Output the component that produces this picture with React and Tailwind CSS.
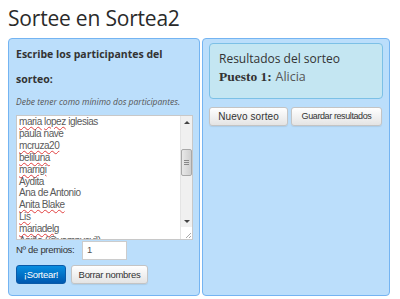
import { useState } from "react";

const names = [
  { t: "maria lopez iglesias", bad: ["maria", "lopez"] },
  { t: "paula nave" },
  { t: "mcruza20", all: true },
  { t: "beliluna", all: true },
  { t: "marrigi", all: true },
  { t: "Aydita" },
  { t: "Ana de Antonio" },
  { t: "Anita Blake", all: true },
  { t: "Lis", all: true },
  { t: "mariadelg", all: true },
  { t: "Aniña (@vampyevil)", all: true },
];

const squiggle =
  "underline decoration-wavy decoration-[#e04040] decoration-1 underline-offset-[1px]";

function NameLine({ item }) {
  if (item.all) {
    return (
      <div className="whitespace-nowrap">
        <span className={squiggle}>{item.t}</span>
      </div>
    );
  }
  if (item.bad) {
    return (
      <div className="whitespace-nowrap">
        {item.t.split(" ").map((w, i) => (
          <span key={i}>
            <span className={item.bad.includes(w) ? squiggle : ""}>{w}</span>{" "}
          </span>
        ))}
      </div>
    );
  }
  return <div className="whitespace-nowrap">{item.t}</div>;
}

function Scrollbar() {
  return (
    <div className="w-[12px] h-full bg-[#f0f0f0] border-l border-[#e4e4e4] flex flex-col items-center">
      <div className="h-[12px] w-full flex items-center justify-center">
        <div className="w-0 h-0 border-l-[3px] border-r-[3px] border-b-[3px] border-l-transparent border-r-transparent border-b-[#444]" />
      </div>
      <div className="h-[21px]" />
      <div className="w-[11px] h-[27px] rounded-[2px] border border-[#a8a8a8] bg-gradient-to-r from-[#e8e8e8] to-[#cfcfcf] flex flex-col items-center justify-center gap-[1px]">
        <div className="w-[5px] h-px bg-[#888]" />
        <div className="w-[5px] h-px bg-[#888]" />
        <div className="w-[5px] h-px bg-[#888]" />
      </div>
      <div className="flex-1" />
      <div className="h-[12px] w-full flex items-center justify-center">
        <div className="w-0 h-0 border-l-[3px] border-r-[3px] border-t-[3px] border-l-transparent border-r-transparent border-t-[#444]" />
      </div>
      <div className="h-[12px] w-full bg-white flex items-end justify-end">
        <svg width="8" height="8" viewBox="0 0 8 8">
          <path d="M7 2 L2 7 M7 5 L5 7" stroke="#aaa" strokeWidth="1" />
        </svg>
      </div>
    </div>
  );
}

const btnLight =
  "h-[19px] rounded-[3px] bg-gradient-to-b from-white to-[#e4e4e4] border border-[#c4c4c4] text-[#333] leading-none whitespace-nowrap shadow-[0_1px_1px_rgba(0,0,0,0.08)]";

export default function App() {
  const [prizes] = useState("1");
  return (
    <div className="w-[400px] h-[299px] bg-white overflow-hidden px-[8px] pt-[5px] font-['Liberation_Sans',Arial,sans-serif] text-[#555]">
      <h1 className="font-['Open_Sans',sans-serif] text-[21px] leading-[27px] text-[#2a2a2a] h-[33px] tracking-[-0.2px]">
        Sortee en Sortea2
      </h1>
      <div className="flex gap-[2px]">
        <div className="w-[192px] h-[258px] bg-[#bbdefb] border border-[#74b4f2] rounded-[4px] px-[7px] pt-[3px]">
          <h4 className="font-['Open_Sans',sans-serif] font-bold text-[10.5px] leading-[25px] text-[#333]">
            Escribe los participantes del sorteo:
          </h4>
          <p className="font-['Open_Sans',sans-serif] italic text-[8.5px] leading-[12px] text-[#555] mt-[4px]">
            Debe tener como mínimo dos participantes.
          </p>
          <div className="mt-[7px] w-[177px] h-[125px] bg-white border border-[#c8c8c8] flex overflow-hidden">
            <div className="flex-1 overflow-hidden pl-[2px] text-[10px] tracking-[-0.45px] leading-[11.9px] text-[#5a5a5a]">
              {names.map((n, i) => (
                <NameLine key={i} item={n} />
              ))}
            </div>
            <Scrollbar />
          </div>
          <div className="flex items-center h-[19px] mt-[1px]">
            <span className="text-[9.5px] tracking-[-0.3px] text-[#333] w-[66px] whitespace-nowrap">
              Nº de premios:
            </span>
            <div className="w-[45px] h-[19px] bg-white border border-[#ccc] text-[9.5px] text-[#555] pl-[4px] flex items-center">
              {prizes}
            </div>
          </div>
          <div className="flex gap-[5px] mt-[5px]">
            <button className="w-[50px] h-[19px] rounded-[3px] bg-gradient-to-b from-[#0a8ee0] to-[#0058b0] border border-[#0a5aa8] text-white text-[9.5px] tracking-[-0.3px] leading-none whitespace-nowrap">
              ¡Sortear!
            </button>
            <button className={`${btnLight} w-[77px] text-[9.5px] tracking-[-0.3px]`}>
              Borrar nombres
            </button>
          </div>
        </div>
        <div className="w-[188px] h-[258px] bg-[#bbdefb] border border-[#74b4f2] rounded-[4px] px-[6px] pt-[4px]">
          <div className="h-[56px] bg-[#c4e6f2] border border-[#7cc0e6] rounded-[4px] px-[9px] pt-[6px] text-[#333]">
            <div className="font-['Open_Sans',sans-serif] text-[12px] leading-[18px]">
              Resultados del sorteo
            </div>
            <div className="text-[13px] leading-[18px] whitespace-nowrap">
              <span className="font-['Liberation_Serif',serif] font-bold text-[13.5px]">Puesto 1:</span>{" "}
              <span className="font-['Open_Sans',sans-serif] text-[#555] text-[12.5px]">Alicia</span>
            </div>
          </div>
          <div className="flex gap-[3px] mt-[8px]">
            <button className={`${btnLight} w-[79px] text-[10px] tracking-[0.1px]`}>
              Nuevo sorteo
            </button>
            <button className={`${btnLight} w-[91px] text-[9px] tracking-[-0.4px]`}>
              Guardar resultados
            </button>
          </div>
        </div>
      </div>
    </div>
  );
}
